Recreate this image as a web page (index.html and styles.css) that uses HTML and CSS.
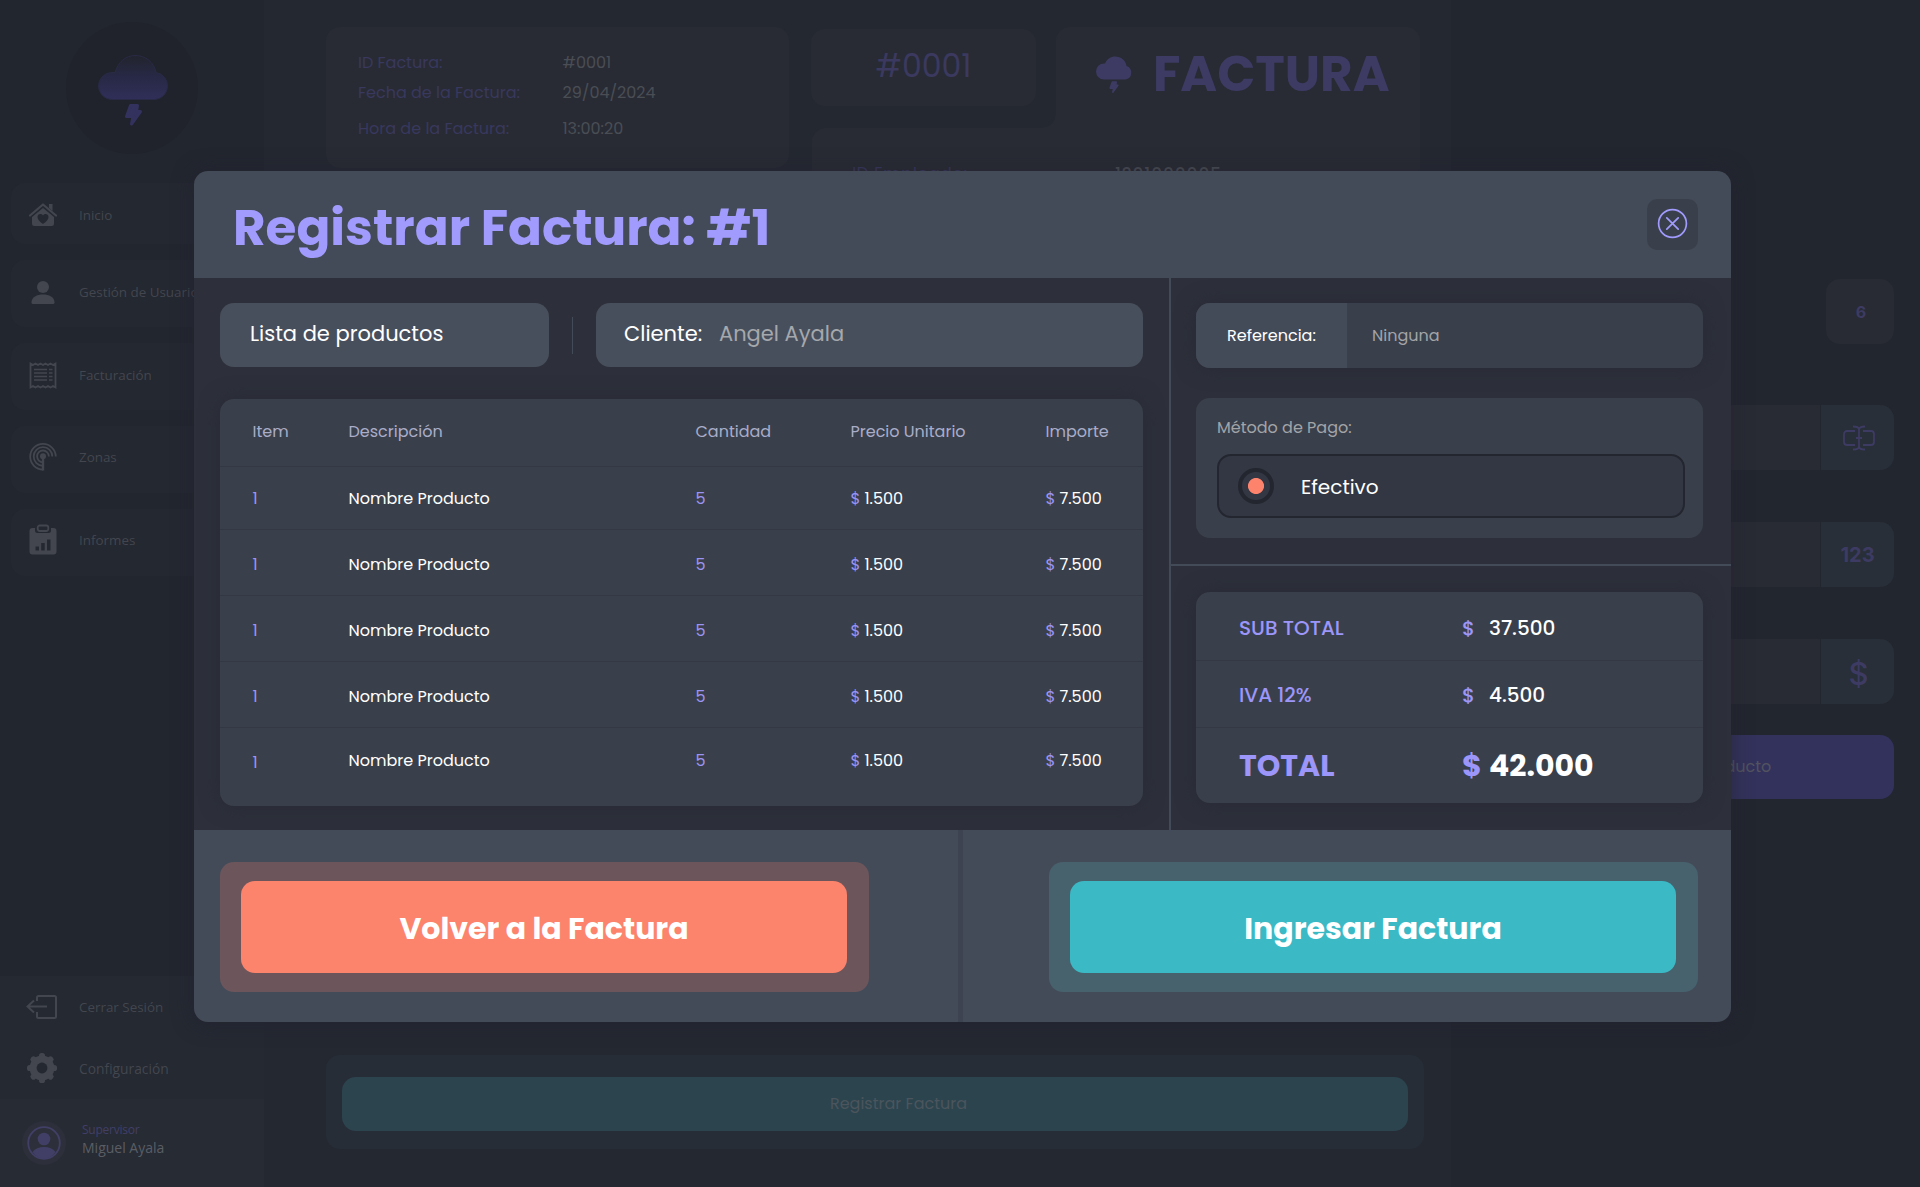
FILE: index.html
```
<!DOCTYPE html>
<html lang="es">
<head>
<meta charset="utf-8">
<title>Registrar Factura</title>
<link rel="stylesheet" href="styles.css">
</head>
<body>
<svg width="0" height="0" class="defs" aria-hidden="true">
  <symbol id="bolt" viewBox="0 0 18 24"><path d="M6 3h7l-1 6h4L7 21.500l1.500-7.500H2z" stroke="currentColor" stroke-width="3" stroke-linejoin="round" fill="currentColor"/></symbol>
</svg>
<div class="app">
  <aside class="sidebar">
    <div class="logo">
      <svg width="70" height="84" viewBox="0 0 70 84">
        <defs><linearGradient id="sky" x1="0" y1="0" x2="0" y2="1"><stop offset="0" stop-color="#22242d"/><stop offset=".45" stop-color="#272844"/><stop offset="1" stop-color="#302f59"/></linearGradient></defs>
        <path d="M14 51.500a13.500 13.500 0 0 1 0-27h3C20 14 28 7.500 37 7.500c11 0 19 7 21 17A13.600 13.600 0 0 1 57 51.500z" fill="url(#sky)" stroke="#292a46" stroke-width="1"/>
        <use href="#bolt" x="26.500" y="54.500" width="18" height="24" color="#33325e"/>
      </svg>
    </div>
    <nav class="nav">
      <a class="nav-item first"><svg width="28" height="26" viewBox="0 0 28 26"><path d="M1 13.500 14 2.500l13 11" fill="none" stroke="currentColor" stroke-width="2.200" stroke-linecap="round" stroke-linejoin="round"/><path d="M20 2h3.500v7L20 6z" fill="currentColor"/><path fill-rule="evenodd" d="M14 6 25 15v6.500a2.500 2.500 0 0 1-2.500 2.500h-17A2.500 2.500 0 0 1 3 21.500V15zM14 22c3.500-2.500 5.500-4.500 5.500-7 0-3-3.500-4-5.500-1.500C12 11 8.500 12 8.500 15c0 2.500 2 4.500 5.500 7z" fill="currentColor"/></svg><span>Inicio</span></a>
      <a class="nav-item"><svg width="28" height="26" viewBox="0 0 28 26"><circle cx="14" cy="8" r="6" fill="currentColor"/><path d="M2.500 23.500C2.500 18 8 15.500 14 15.500S25.500 18 25.500 23.500q0 1.500-1.500 1.500H4q-1.500 0-1.500-1.500z" fill="currentColor"/></svg><span>Gestión de Usuarios</span></a>
      <a class="nav-item"><svg width="28" height="29" viewBox="0 0 28 29"><path d="M1.500 2.500l2.500 1.500 2.500-1.500L9 4l2.500-1.500L14 4l2.500-1.500L19 4l2.500-1.500L24 4l2.500-1.500v24L24 25l-2.500 1.500L19 25l-2.500 1.500L14 25l-2.500 1.500L9 25l-2.500 1.500L4 25l-2.500 1.500z" fill="none" stroke="currentColor" stroke-width="1.800"/><path d="M5 8.500h13M5 12h13M5 15.500h13M5 19h13M20 8.500h3.500M20 12h3.500M20 15.500h3.500M20 19h3.500" stroke="currentColor" stroke-width="1.700"/></svg><span>Facturación</span></a>
      <a class="nav-item up"><svg width="28" height="28" viewBox="0 0 28 28"><g fill="none" stroke="currentColor" stroke-width="1.800"><path d="M14 26.500A12.800 12.800 0 1 1 26.800 13.500"/><path d="M14 22.800a9.300 9.300 0 1 1 9.300-9.300"/><path d="M14 19.300a5.900 5.900 0 1 1 5.900-5.800"/><path d="M14 27.500V13.500" stroke-width="2.400"/></g><circle cx="14" cy="13.300" r="3" fill="currentColor"/></svg><span>Zonas</span></a>
      <a class="nav-item up"><svg width="28" height="32" viewBox="0 0 28 32"><path fill-rule="evenodd" d="M3.500 4H6v2.500A2.500 2.500 0 0 0 8.500 9h11A2.500 2.500 0 0 0 22 6.500V4h2.500A3 3 0 0 1 27.500 7v20.500a3 3 0 0 1-3 3h-21a3 3 0 0 1-3-3V7a3 3 0 0 1 3-3zM6.500 22.500v4h3.500v-4zM12.200 19v7.500h3.500V19zM18 15.500v11h3.500v-11z" fill="currentColor"/><rect x="8.700" y="1.500" width="10.600" height="5.500" rx="2" fill="none" stroke="currentColor" stroke-width="1.800"/></svg><span>Informes</span></a>
    </nav>
    <div class="side-foot">
      <a class="foot-item"><svg width="32" height="26" viewBox="0 0 32 26"><path d="M11 7V3.500A1.500 1.500 0 0 1 12.500 2h16A1.500 1.500 0 0 1 30 3.500v19a1.500 1.500 0 0 1-1.500 1.500h-16a1.500 1.500 0 0 1-1.500-1.500V18M21 12.500H1.500M8 6.500l-6.500 6L8 18.500" fill="none" stroke="currentColor" stroke-width="2"/></svg><span>Cerrar Sesión</span></a>
      <a class="foot-item config"><svg width="32" height="32" viewBox="-16 -16 32 32"><g fill="currentColor"><g id="teeth"><rect x="-3" y="-15" width="6" height="30" rx="2.600"/><rect x="-15" y="-3" width="30" height="6" rx="2.600"/></g><use href="#teeth" transform="rotate(45)"/></g><circle r="8.900" fill="none" stroke="currentColor" stroke-width="7"/><circle r="5.400" fill="#242831"/></svg><span>Configuración</span></a>
    </div>
    <div class="profile">
      <div class="avatar"><svg width="34" height="34" viewBox="0 0 34 34"><circle cx="17" cy="17" r="15.800" fill="none" stroke="currentColor" stroke-width="1.800"/><circle cx="17" cy="13" r="6.300" fill="currentColor"/><path d="M5.500 26C8 22.500 12 21 17 21s9 1.500 11.500 5A15 15 0 0 1 17 32.500 15 15 0 0 1 5.500 26z" fill="currentColor"/></svg></div>
      <div class="who"><div class="role">Supervisor</div><div class="user">Miguel Ayala</div></div>
    </div>
  </aside>

  <main class="main">
    <div class="top">
      <section class="meta">
        <div class="meta-row"><span class="lab">ID Factura:</span><span class="num">#0001</span></div>
        <div class="meta-row r2"><span class="lab">Fecha de la Factura:</span><span class="num">29/04/2024</span></div>
        <div class="meta-row r3"><span class="lab">Hora de la Factura:</span><span class="num">13:00:20</span></div>
      </section>
      <section class="invoice">
        <div class="invoice-top">
          <div class="number">#0001</div>
          <div class="tab">
            <svg width="38" height="38" viewBox="0 0 38 38"><path d="M9 24.500a8 8 0 0 1 0-16h1C12 4 16 1.500 20 1.500c6 0 11 4 11.500 9.500a7 7 0 0 1-1 13.500z" fill="currentColor"/><use href="#bolt" x="14" y="25.500" width="10" height="13"/></svg>
            <h2>FACTURA</h2>
          </div>
        </div>
        <div class="invoice-body"><span class="lab emp">ID Empleado:</span><span class="num code">1201000005</span></div>
      </section>
    </div>
    <div class="register"><button class="register-btn">Registrar Factura</button></div>
  </main>

  <section class="product">
    <div class="count">6</div>
    <div class="field f1"><span class="field-icon"><svg width="34" height="26" viewBox="0 0 34 26"><path d="M13 6H5a3 3 0 0 0-3 3v8a3 3 0 0 0 3 3h8M21 6h8a3 3 0 0 1 3 3v8a3 3 0 0 1-3 3h-8M17 4v18M14 13h6M11 1.500c3 0 6 .5 6 3 0-2.500 3-3 6-3M11 24.500c3 0 6-.5 6-3 0 2.500 3 3 6 3" fill="none" stroke="currentColor" stroke-width="1.800"/></svg></span></div>
    <div class="field f2"><span class="field-icon n123">123</span></div>
    <div class="field f2"><span class="field-icon dollar">$</span></div>
    <button class="add">Agregar Producto</button>
  </section>
</div>

<div class="modal" role="dialog">
  <header class="modal-head">
    <h1>Registrar Factura: #1</h1>
    <button class="close"><svg width="31" height="31" viewBox="0 0 31 31"><g fill="none" stroke="currentColor" stroke-width="1.700" stroke-linecap="round"><circle cx="15.500" cy="15.500" r="13.900"/><path d="M9.800 9.800l11.400 11.400M21.200 9.800 9.800 21.200"/></g></svg></button>
  </header>
  <div class="modal-body">
    <div class="left">
      <div class="chips">
        <div class="chip list">Lista de productos</div>
        <i class="sep"></i>
        <div class="chip client"><b>Cliente:</b><span>Angel Ayala</span></div>
      </div>
      <div class="table">
        <div class="tr th"><span>Item</span><span>Descripción</span><span>Cantidad</span><span>Precio Unitario</span><span>Importe</span></div>
        <div class="tr first"><span class="p">1</span><span>Nombre Producto</span><span class="p">5</span><span class="amt"><i>$</i>1.500</span><span class="amt"><i>$</i>7.500</span></div>
        <div class="tr"><span class="p">1</span><span>Nombre Producto</span><span class="p">5</span><span class="amt"><i>$</i>1.500</span><span class="amt"><i>$</i>7.500</span></div>
        <div class="tr"><span class="p">1</span><span>Nombre Producto</span><span class="p">5</span><span class="amt"><i>$</i>1.500</span><span class="amt"><i>$</i>7.500</span></div>
        <div class="tr"><span class="p">1</span><span>Nombre Producto</span><span class="p">5</span><span class="amt"><i>$</i>1.500</span><span class="amt"><i>$</i>7.500</span></div>
        <div class="tr last"><span class="p low">1</span><span>Nombre Producto</span><span class="p">5</span><span class="amt"><i>$</i>1.500</span><span class="amt"><i>$</i>7.500</span></div>
      </div>
    </div>
    <div class="right">
      <div class="pay">
        <div class="ref"><b>Referencia:</b><span>Ninguna</span></div>
        <div class="method">
          <div class="method-label">Método de Pago:</div>
          <div class="option"><span class="radio"></span><span>Efectivo</span></div>
        </div>
      </div>
      <div class="sums">
        <div class="totals">
          <div class="sum s1"><span>SUB TOTAL</span><i>$</i><b>37.500</b></div>
          <div class="sum s2"><span>IVA 12%</span><i>$</i><b>4.500</b></div>
          <div class="sum total"><span>TOTAL</span><i>$</i><b>42.000</b></div>
        </div>
      </div>
    </div>
  </div>
  <footer class="modal-foot">
    <div class="foot-l"><div class="ring coral"><button>Volver a la Factura</button></div></div>
    <div class="foot-r"><div class="ring teal"><button>Ingresar Factura</button></div></div>
  </footer>
</div>
</body>
</html>
```
FILE: styles.css
```
* { box-sizing: border-box; margin: 0; padding: 0; }
body {
  position: relative;
  width: 1920px;
  height: 1187px;
  overflow: hidden;
  background: #22262f;
  font-family: Poppins, Inter, sans-serif;
  font-size: 16px;
  color: #fff;
}
button { border: 0; font: inherit; color: inherit; }
i { font-style: normal; }
svg { display: block; flex: none; }
.defs { position: absolute; }

/* dimmed application behind the dialog */
.app { display: grid; grid-template-columns: 264px 1187px 469px; height: 1187px; }

.sidebar { display: flex; flex-direction: column; background: #22262f; font-family: "Open Sans", "Noto Sans", sans-serif; font-size: 13.400px; color: #43464e; }
.logo { width: 132px; height: 132px; margin: 22px 0 0 66px; border-radius: 50%; background: #20232c; display: flex; justify-content: center; padding: 26px 0 0 1px; }
.nav { display: flex; flex-direction: column; gap: 16px; margin-top: 29px; padding-left: 11px; }
.nav-item { display: flex; align-items: center; height: 67px; border-radius: 14px 0 0 14px; background: #242831; padding: 0 0 3px 18px; }
.nav-item.first { height: 61px; padding: 3px 0 0 18px; }
.nav-item.up { padding-bottom: 5px; }
.nav-item svg { margin-right: 22px; }
.side-foot { margin-top: auto; height: 123px; background: #242932; padding: 14px 0 0 26px; }
.foot-item { display: flex; align-items: center; height: 34px; }
.foot-item + .foot-item { margin-top: 27px; }
.foot-item svg { margin-right: 21px; }
.config { font-size: 13.800px; }
.profile { height: 88px; background: #272b34; display: flex; align-items: center; padding-left: 22px; gap: 16px; }
.who { padding-bottom: 6px; }
.avatar { width: 44px; height: 44px; border-radius: 50%; background: #2d303a; color: #423f67; display: grid; place-items: center; }
.role { font-size: 12px; line-height: 16px; letter-spacing: -.25px; color: #413f68; }
.user { font-size: 14px; line-height: 20px; color: #5a5e64; }

.main { display: flex; flex-direction: column; background: #242831; padding: 27px 27px 38px 62px; }
.top { display: flex; gap: 22px; }
.meta { width: 463px; height: 141px; border-radius: 14px; background: #282b34; padding: 26px 0 0 32px; }
.meta-row { display: grid; grid-template-columns: 204.500px 1fr; height: 20px; line-height: 20px; }
.meta-row.r2 { margin-top: 10px; }
.meta-row.r3 { margin-top: 16px; }
.lab { color: #39385e; }
.num { color: #4a4e54; }
.invoice { width: 609px; }
.invoice-top { display: flex; justify-content: space-between; height: 101px; }
.number { width: 225px; height: 77px; margin-top: 2px; border-radius: 14px; background: #282b34; color: #3b395f; font-size: 31.500px; line-height: 75px; text-align: center; }
.tab { position: relative; width: 364px; border-radius: 14px 14px 0 0; background: #282b34; color: #3d3b63; display: flex; align-items: flex-start; padding: 28px 0 0 39px; }
.tab::before { content: ""; position: absolute; left: -14px; bottom: 0; width: 14px; height: 14px; background: radial-gradient(circle at 0 0, transparent 13.500px, #282b34 14px); }
.tab h2 { font-size: 50px; line-height: 36px; margin: 1px 0 0 20px; }
.invoice-body { height: 460px; margin-left: 1px; border-radius: 14px 0 14px 14px; background: #282b34; padding: 36px 0 0 40px; line-height: 20px; display: flex; font-size: 17px; }
.emp { width: 263px; letter-spacing: .4px; }
.code { letter-spacing: .9px; font-weight: 500; }
.register { margin-top: auto; width: 1098px; height: 94px; border-radius: 14px; background: #262d36; padding: 22px 16px 0; }
.register-btn { display: block; width: 100%; height: 54px; border-radius: 14px; background: #2c444e; color: #4b555d; padding: 0 0 2px 47px; }

.product { padding: 279px 26px 0 56px; display: flex; flex-direction: column; }
.count { align-self: flex-end; width: 68px; height: 65px; border-radius: 14px; background: #282b34; color: #3d3b63; font-family: Inter, sans-serif; font-weight: 700; line-height: 66px; text-align: center; padding-left: 2px; }
.field { height: 65px; border-radius: 14px; background: #282b34; display: flex; justify-content: flex-end; overflow: hidden; }
.f1 { margin-top: 61px; }
.f2 { margin-top: 52px; }
.field-icon { width: 74px; border-left: 1px solid #22262f; background: #282f38; color: #3d3b63; display: grid; place-items: center; padding-left: 2px; }
.n123 { font: 700 20px Inter, sans-serif; padding-left: 0; }
.dollar { font: 500 31px Inter, sans-serif; padding-top: 3px; }
.add { height: 64px; margin-top: 31px; border-radius: 14px; background: #33325c; color: #52535f; padding-bottom: 2px; }

/* dialog */
.modal { position: absolute; left: 194px; top: 171px; width: 1537px; height: 851px; border-radius: 14px; background: #444b58; box-shadow: 0 1px 20px 1px rgba(34, 32, 46, .55); display: flex; flex-direction: column; }
.modal-head { height: 107px; display: flex; justify-content: space-between; align-items: flex-start; padding: 28px 33px 0 39px; }
h1 { font-size: 50px; line-height: 57px; color: #a29bfe; }
.close { width: 51px; height: 51px; border-radius: 10px; background: #3a404b; color: #a29bfe; display: grid; place-items: center; padding-bottom: 2px; }
.modal-body { height: 552px; background: #2d303a; display: flex; overflow: hidden; }
.left { width: 977px; border-right: 2px solid #444b58; padding: 25px 0 0 26px; }
.chips { display: flex; align-items: center; width: 923px; height: 64px; }
.chip { height: 64px; border-radius: 14px; background: #484f5c; line-height: 62px; font-size: 21px; }
.list { width: 329px; padding-left: 30px; }
.sep { width: 1px; height: 37px; background: #444b58; margin: 0 23px; }
.client { width: 547px; padding-left: 28px; display: flex; }
.client b { font-weight: 400; width: 95px; }
.client span { color: #a5a8ac; }

.table { width: 923px; height: 407px; margin-top: 32px; border-radius: 14px; background: #3a404b; box-shadow: 0 0 20px 0 #282a37; }
.tr { display: grid; grid-template-columns: 96px 347px 155px 195px 1fr; padding: 2px 0 0 32.500px; height: 66px; line-height: 66px; border-bottom: 1px solid #333844; }
.tr.th { height: 68px; line-height: 63px; padding-top: 1px; color: #a9adc9; }
.tr.first { height: 63px; line-height: 61px; padding-top: 1px; }
.tr.last { height: 78px; line-height: 64px; padding-top: 1px; border: 0; }
.p, .tr i { color: #9a94f5; }
.low { padding-top: 2px; }
.tr i { display: inline-block; width: 14px; }
.amt { white-space: nowrap; }

.right { flex: 1; display: flex; flex-direction: column; }
.pay { height: 288px; border-bottom: 2px solid #444b58; padding: 25px 0 0 25px; }
.ref { width: 507px; height: 65px; border-radius: 14px; background: #3a404b; box-shadow: 0 0 20px 0 #282a37; display: flex; line-height: 65px; }
.ref b { width: 151px; border-radius: 14px 0 0 14px; background: #444b58; padding-left: 31px; font-weight: 400; }
.ref span { padding-left: 25px; color: #a2a4a8; }
.method { width: 507px; height: 140px; margin-top: 30px; border-radius: 14px; background: #3a404b; padding: 20px 18px 0 21px; }
.method-label { line-height: 20px; color: #a2a4a8; }
.option { height: 64px; margin-top: 16px; border: 2px solid #23262f; border-radius: 14px; background: #323743; display: flex; align-items: center; font-size: 20px; padding-left: 19px; }
.option span:last-child { padding-top: 1px; }
.radio { width: 36px; height: 36px; border: 4px solid #23262f; border-radius: 50%; margin-right: 27px; background: radial-gradient(circle, #fd836d 7.600px, transparent 8.400px); }
.sums { padding: 26px 0 0 25px; }
.totals { width: 507px; height: 211px; border-radius: 14px; background: #3a404b; box-shadow: 0 0 20px 0 #282a37; }
.sum { display: grid; grid-template-columns: 223px 27px 1fr; padding-left: 43px; font-size: 20px; font-weight: 500; color: #9c96fb; border-bottom: 1px solid #333844; }
.sum b { font-weight: inherit; color: #fff; }
.s1 { height: 69px; line-height: 73px; }
.s2 { height: 67px; line-height: 69px; }
.total { height: 75px; line-height: 76px; font-size: 30px; font-weight: 700; border: 0; }

.modal-foot { height: 192px; display: flex; }
.foot-l { width: 769px; border-right: 5px solid #3d4350; padding: 32px 0 0 26px; }
.foot-r { flex: 1; padding: 32px 33px 0 0; display: flex; justify-content: flex-end; }
.ring { width: 649px; height: 130px; border-radius: 14px; padding: 19px 21px; }
.ring button { display: block; width: 606px; height: 92px; border-radius: 14px; font-size: 30px; font-weight: 700; line-height: 90px; padding-top: 3px; }
.coral { background: #6c565c; }
.coral button { background: #fc836c; }
.teal { background: #47616d; }
.teal button { background: #3bb9c5; }
```
